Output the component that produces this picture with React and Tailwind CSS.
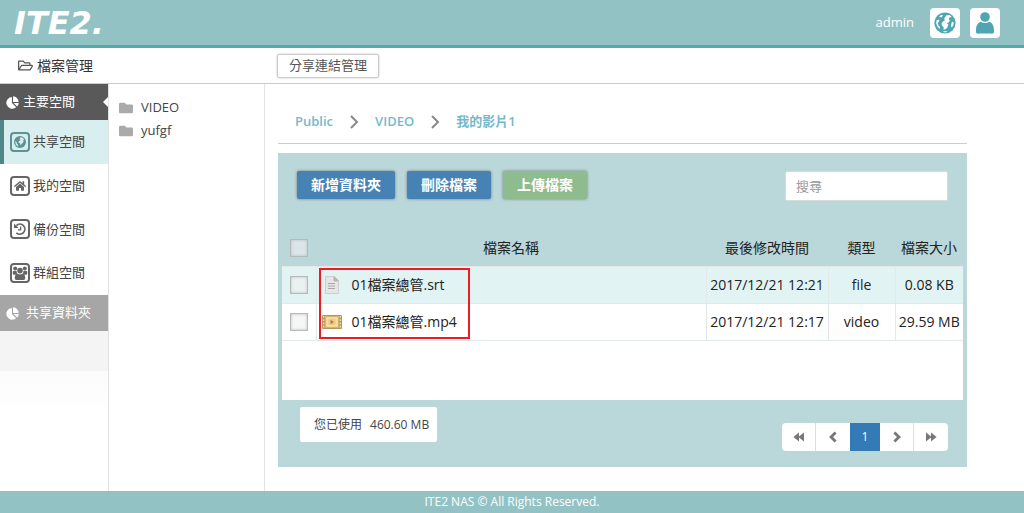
import { clsx } from "clsx";
import { FaFolder, FaHome, FaRegFolderOpen } from "react-icons/fa";

const PieIcon = () => (
    <svg viewBox="0 0 14 14" className="size-[13px]" fill="currentColor">
        <path d="M6.4 1V7.6L11 12.2A6.4 6.4 0 1 1 6.4 1Z" />
        <path d="M7.6 .4A6.2 6.2 0 0 1 13.6 6.4H7.6Z" />
        <path d="M8.2 7.6H13.8A6.2 6.2 0 0 1 12 11.4Z" />
    </svg>
);

const EarthIcon = () => (
    <svg viewBox="0 0 14 14" className="size-3">
        <circle cx="7" cy="7" r="7" fill="#5d9396" />
        <path
            d="M7.6 1.4L10.4 2 11.8 4 10.4 5.2 11.4 6.4 9 9.4 7.4 10.6 7 8.6 5.2 8 5.6 6 7.6 5 6.4 3.6ZM1.4 5.6L3.2 7.6 3.6 9.4 5 10.4 4.6 12.2 2 10Z"
            fill="#d9eeee"
        />
    </svg>
);

const HistoryIcon = () => (
    <svg viewBox="0 0 14 14" className="size-3.5" fill="none" stroke="currentColor" strokeWidth="1.7">
        <path d="M3.4 3.6A5 5 0 1 1 3.4 10.8" />
        <path d="M7.6 4.4V7.8H5" strokeWidth="1.3" />
        <path d="M1 1.4V6H5.6Z" fill="currentColor" stroke="none" />
    </svg>
);

const GroupIcon = () => (
    <svg viewBox="0 0 16 16" className="size-4" fill="currentColor">
        <circle cx="3.2" cy="3.6" r="2" />
        <circle cx="12.8" cy="3.6" r="2" />
        <circle cx="8" cy="5.6" r="2.8" />
        <path d="M1 6H4.6L5 8.6 3.8 9.8H1.6L.6 8.6ZM15 6H11.4L11 8.6 12.2 9.8H14.4L15.4 8.6Z" />
        <path d="M5.4 8.6Q8 10.4 10.6 8.6C12.4 9 13.2 11 13.2 13V13.8Q12.8 15 11.4 15H4.6Q3.2 15 2.8 13.8V13C2.8 11 3.6 9 5.4 8.6Z" />
    </svg>
);

const HomeIcon = () => <FaHome size={12} />;

const Chevron = ({ left }) => (
    <svg
        viewBox="0 0 12 12"
        className={clsx("size-3", left && "rotate-180")}
        fill="none"
        stroke="currentColor"
        strokeWidth="2.8"
    >
        <path d="M3.4 1.4L8 6 3.4 10.6" />
    </svg>
);

const DoubleArrow = ({ left }) => (
    <svg
        viewBox="0 0 12 12"
        className={clsx("size-3", left && "rotate-180")}
        fill="currentColor"
    >
        <path d="M1 1.4L6 5.4V1.4L11.6 6 6 10.6V6.6L1 10.6Z" />
    </svg>
);

const spaces = [
    { label: "共享空間", icon: EarthIcon, active: true },
    { label: "我的空間", icon: HomeIcon },
    { label: "備份空間", icon: HistoryIcon },
    { label: "群組空間", icon: GroupIcon },
];

const folders = ["VIDEO", "yufgf"];

const crumbs = ["Public", "VIDEO", "我的影片1"];

const files = [
    { name: "01檔案總管.srt", date: "2017/12/21 12:21", type: "file", size: "0.08 KB" },
    { name: "01檔案總管.mp4", date: "2017/12/21 12:17", type: "video", size: "29.59 MB" },
];

const GlobeIcon = () => (
    <svg viewBox="0 0 22 22" className="size-[22px]">
        <circle cx="11" cy="11" r="10.6" fill="#4fa6b3" />
        <path
            d="M12 3.4L15.6 3 17.6 5 15.4 5.4 14.8 7.4 16 8.6 14.6 10.6 12.6 11 14.4 12.6 13.4 15.4 11.4 17.2 9.4 17.8 9.8 15.4 8.2 13.8 7.4 11.4 9 9.4 10.8 8.6 10.2 6.4Z"
            fill="#fff"
        />
        <path
            d="M5 4.6L7.6 2.8 9 3.6 7.2 5.4ZM2.4 8.4L4.8 7.4 5.4 9 3.6 11 4.6 13.4 6 15 5.6 17 3.4 14.6 2.2 11.6ZM18 9.4L19.8 10.4 19.2 13.8 17.4 15.6 17 13ZM9 19.2H13.6L12 20.2H10Z"
            fill="#fff"
        />
    </svg>
);

const UserIcon = () => (
    <svg viewBox="0 0 20 24" className="h-6 w-5" fill="#4fa6b3">
        <circle cx="10" cy="6" r="4.8" />
        <path d="M5.6 10.8Q10 13.4 14.4 10.8C17.6 12 19 15.4 19 19V21.4Q18 23 15.6 22.6H4.4Q2 23 1 21.4V19C1 15.4 2.4 12 5.6 10.8Z" />
    </svg>
);

const FileIcon = () => (
    <svg viewBox="0 0 20 20" className="size-5">
        <path d="M3.5 1.5H12L16.5 6V18.5H3.5Z" fill="#e6e6e6" stroke="#cfcfcf" />
        <path d="M12 1.5V6H16.5Z" fill="#b5b5b5" stroke="#b5b5b5" />
        <path d="M6 8.5H13M6 11H13M6 13.5H13" stroke="#a8a8a8" />
    </svg>
);

const VideoIcon = () => (
    <svg viewBox="0 0 20 14" className="h-[14px] w-5">
        <rect width="20" height="14" rx="1" fill="#b8935a" />
        <path d="M1.7 1V13M18.3 1V13" stroke="#f3dfb2" strokeWidth="1.4" strokeDasharray="1.8 1.4" />
        <rect x="3.6" y="1.6" width="12.8" height="10.8" fill="#f5dda4" stroke="#d9b56a" />
        <rect x="6.4" y="4" width="7.2" height="6" fill="#ecca84" />
        <path d="M8.6 5L11.8 7 8.6 9Z" fill="#a37a35" />
    </svg>
);

const Header = () => (
    <header className="flex h-12 items-center justify-between border-b-3 border-[#54aaa9] bg-[#93c2c4] pr-6 pl-3.5 text-white">
        <a
            href="#"
            className="font-['DejaVu_Sans',sans-serif] text-[32px] leading-none font-bold italic"
        >
            ITE2.
        </a>
        <div className="flex items-center text-[13px]">
            <span className="mr-4">admin</span>
            <button
                aria-label="Language"
                className="mr-2.5 flex size-[30px] items-center justify-center rounded bg-white"
            >
                <GlobeIcon />
            </button>
            <button
                aria-label="Account"
                className="flex size-[30px] items-center justify-center rounded bg-white"
            >
                <UserIcon />
            </button>
        </div>
    </header>
);

const Sidebar = () => (
    <nav className="w-[109px] shrink-0 border-r border-[#e2e2e2] text-[13px] text-[#444]">
        <div className="relative flex h-9 items-center gap-1 bg-[#595959] pl-1.5 text-white">
            <PieIcon />
            主要空間
            <span className="absolute right-0 border-y-5 border-r-5 border-y-transparent border-r-white"></span>
        </div>
        <div className="grid h-[175px] grid-rows-4">
            {spaces.map(({ label, icon: Icon, active }) => (
                <a
                    key={label}
                    href="#"
                    className={clsx(
                        "flex items-center gap-[3px] border-l-4 pl-1.5",
                        active ? "border-[#4f8788] bg-[#d9eeee]" : "border-transparent"
                    )}
                >
                    <span
                        className={clsx(
                            "flex size-5 items-center justify-center rounded border-2",
                            active
                                ? "border-[#5d9396] text-[#5d9396]"
                                : "border-[#666] text-[#666]"
                        )}
                    >
                        <Icon />
                    </span>
                    {label}
                </a>
            ))}
        </div>
        <div className="flex h-9 items-center gap-[7px] bg-[#a6a6a6] pl-1.5 text-white">
            <PieIcon />
            共享資料夾
        </div>
        <div className="h-10 bg-[#f4f4f4]"></div>
        <div className="h-10 bg-gradient-to-b from-[#fbfbfb] to-white"></div>
    </nav>
);

const FolderTree = () => (
    <aside className="w-[156px] shrink-0 border-r border-[#e2e2e2] pt-3 pl-2.5 text-[13px] text-[#444]">
        {folders.map((name) => (
            <a key={name} href="#" className="flex h-[23px] items-center gap-2">
                <FaFolder size={14} className="text-[#aaa]" />
                {name}
            </a>
        ))}
    </aside>
);

const Breadcrumb = () => (
    <div className="flex h-[60px] items-center gap-3.5 border-b border-[#ccc] px-[17px] pt-4 text-[13px] font-semibold text-[#74b9ca]">
        {crumbs.map((crumb, i) => (
            <div key={crumb} className="flex items-center gap-3.5">
                {i > 0 && (
                    <svg
                        viewBox="0 0 14 14"
                        className="size-3.5"
                        fill="none"
                        stroke="#888"
                        strokeWidth="2"
                    >
                        <path d="M4 1L10 7 4 13" />
                    </svg>
                )}
                <a href="#">{crumb}</a>
            </div>
        ))}
    </div>
);

const actionButton =
    "h-7 rounded-xs px-3.5 text-sm leading-none font-bold text-white shadow-[0_0_3px_#777]";

const Toolbar = () => (
    <div className="flex items-start justify-between px-[15px] pt-[18px] pb-[29px]">
        <div className="flex gap-3">
            <button className={clsx(actionButton, "bg-[#4682b4]")}>新增資料夾</button>
            <button className={clsx(actionButton, "bg-[#4682b4]")}>刪除檔案</button>
            <button className={clsx(actionButton, "bg-[#8fbc8f]")}>上傳檔案</button>
        </div>
        <input
            type="text"
            aria-label="搜尋"
            placeholder="搜尋"
            className="h-[30px] w-[163px] rounded-xs border border-[#d5dcdc] bg-white px-2.5 text-[13px] placeholder:text-[#999]"
        />
    </div>
);

const RowCheckbox = ({ label }) => (
    <input
        type="checkbox"
        aria-label={label}
        className="mx-auto block size-[18px] appearance-none border border-[#b5b9ba] bg-[#f0f0f0]/60 shadow-[inset_0_0_3px_#bbb]"
    />
);

const FileTable = () => (
    <div className="relative min-h-[170px] bg-white">
        <table className="w-full table-fixed text-center text-sm text-[#222]">
            <colgroup>
                <col className="w-[34px]" />
                <col />
                <col className="w-[122px]" />
                <col className="w-[67px]" />
                <col className="w-[68px]" />
            </colgroup>
            <thead>
                <tr className="h-9 bg-[#bad7d9]">
                    <th>
                        <RowCheckbox label="全選" />
                    </th>
                    <th className="font-normal">檔案名稱</th>
                    <th className="font-normal">最後修改時間</th>
                    <th className="font-normal">類型</th>
                    <th className="font-normal">檔案大小</th>
                </tr>
            </thead>
            <tbody>
                {files.map((file) => (
                    <tr
                        key={file.name}
                        className="h-[37px] divide-x divide-[#e3e8e8] border-y border-[#e3e8e8] odd:bg-[#e2f3f3]"
                    >
                        <td>
                            <RowCheckbox label={file.name} />
                        </td>
                        <td>
                            <div className="flex items-center gap-2.5 pl-[5px]">
                                {file.type === "video" ? <VideoIcon /> : <FileIcon />}
                                <a href="#">{file.name}</a>
                            </div>
                        </td>
                        <td className="whitespace-nowrap">{file.date}</td>
                        <td>{file.type}</td>
                        <td className="whitespace-nowrap">{file.size}</td>
                    </tr>
                ))}
            </tbody>
        </table>
        {/* highlight frame around the file names */}
        <div className="pointer-events-none absolute top-[38px] left-[37px] h-[71px] w-[151px] border-2 border-[#ec1c24]"></div>
    </div>
);

const pageButton = "flex h-7 w-[34px] items-center justify-center text-[#777]";

const Pagination = () => (
    <div className="flex overflow-hidden rounded-sm bg-white">
        <button aria-label="First page" className={clsx(pageButton, "border-r border-[#ddd]")}>
            <DoubleArrow left />
        </button>
        <button aria-label="Previous page" className={pageButton}>
            <Chevron left />
        </button>
        <button className="h-7 w-[30px] bg-[#337ab7] text-xs text-white">1</button>
        <button aria-label="Next page" className={clsx(pageButton, "border-r border-[#ddd]")}>
            <Chevron />
        </button>
        <button aria-label="Last page" className={pageButton}>
            <DoubleArrow />
        </button>
    </div>
);

const App = () => {
    return (
        <div className="flex min-h-screen flex-col bg-white font-['Open_Sans','Noto_Sans_CJK_TC',sans-serif]">
            <Header />
            <div className="flex h-9 items-center border-b border-[#ccc]">
                <h1 className="flex w-[277px] items-center gap-1 pl-[18px] text-sm text-[#333]">
                    <FaRegFolderOpen size={15} className="text-[#555]" />
                    檔案管理
                </h1>
                <button className="h-6 rounded-xs border border-[#ccc] px-[11px] text-[13px] leading-none text-[#555] shadow-[0_0_2px_#bbb]">
                    分享連結管理
                </button>
            </div>
            <div className="flex flex-1">
                <Sidebar />
                <FolderTree />
                <main className="min-w-0 flex-1 pr-[57px] pb-6 pl-[13px]">
                    <Breadcrumb />
                    <section className="mt-[9px] bg-[#bad7d9] px-1">
                        <Toolbar />
                        <FileTable />
                        <div className="flex items-start justify-between pt-[7px] pr-[15px] pb-4 pl-[18px]">
                            <p className="flex h-[35px] items-center gap-2 rounded-xs bg-white pr-2 pl-3.5 text-xs text-[#444]">
                                <span>您已使用</span>
                                <span>460.60 MB</span>
                            </p>
                            <div className="pt-4">
                                <Pagination />
                            </div>
                        </div>
                    </section>
                </main>
            </div>
            <footer className="flex h-[22px] items-center justify-center bg-[#93c2c4] text-xs text-white">
                ITE2 NAS © All Rights Reserved.
            </footer>
        </div>
    );
};

export default App;
